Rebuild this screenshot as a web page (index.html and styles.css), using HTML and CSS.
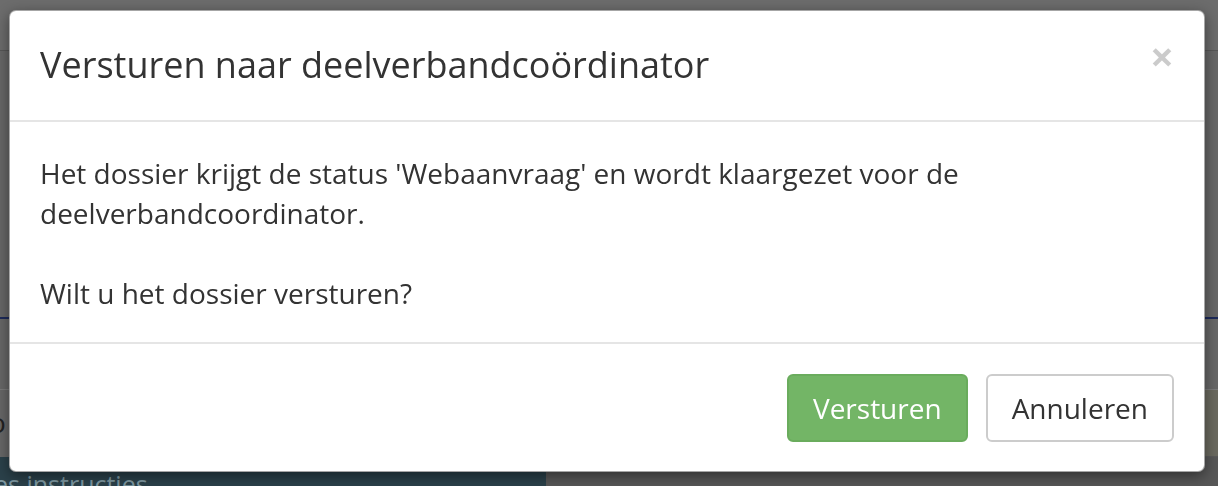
FILE: index.html
```html
<!DOCTYPE html>
<html lang="nl">
<head>
<meta charset="utf-8">
<title>Versturen naar deelverbandcoördinator</title>
<link rel="stylesheet" href="styles.css">
</head>
<body>
<div class="page">
  <div class="topbar"></div>
  <div class="main"></div>
  <div class="rule-blue"></div>
  <div class="gap"></div>
  <div class="row-info">
    <div class="row-left">o</div>
    <div class="row-right"></div>
  </div>
  <div class="bottom">
    <div class="bottom-left">es instructies</div>
    <div class="bottom-right"></div>
  </div>
</div>

<div class="modal-layer">
  <div class="modal">
    <div class="modal-header">
      <h4 class="modal-title">Versturen naar deelverbandcoördinator</h4>
      <button class="close" type="button" aria-label="Sluiten">×</button>
    </div>
    <div class="modal-body">
      <p>Het dossier krijgt de status 'Webaanvraag' en wordt klaargezet voor de deelverbandcoordinator.</p>
      <p>Wilt u het dossier versturen?</p>
    </div>
    <div class="modal-footer">
      <button class="btn btn-success" type="button">Versturen</button>
      <button class="btn btn-default" type="button">Annuleren</button>
    </div>
  </div>
</div>
</body>
</html>
```

FILE: styles.css
```css
* { box-sizing: border-box; }

html, body {
  margin: 0;
  padding: 0;
  height: 100%;
  overflow: hidden;
}

body {
  font-family: "Open Sans", "Noto Sans", sans-serif;
  color: #333;
  background: #666;
}

/* dimmed page behind the modal */
.page {
  height: 100vh;
  display: flex;
  flex-direction: column;
}

.page > div {
  flex-shrink: 0;
}

.topbar {
  height: 51px;
  background: #6c6c6c;
  border-bottom: 1px solid #575757;
}

.main {
  height: 266px;
  background: #676767;
}

.rule-blue {
  height: 2px;
  background: #1d2a5a;
}

.gap {
  height: 71px;
  background: #676767;
  border-bottom: 1px solid #7a7a7a;
}

.row-info {
  height: 67px;
  display: flex;
}

.row-left {
  flex: 0 0 546px;
  background: #676767;
  color: #222;
  font-size: 28px;
  line-height: 64px;
  text-indent: -11px;
  overflow: hidden;
}

.row-right {
  flex: 1;
  background: #6a695f;
  border-bottom: 1px solid #5a5a5a;
}

.page > .bottom {
  flex: 1 1 0;
  min-height: 0;
  display: flex;
  overflow: hidden;
}

.bottom-left {
  flex: 0 0 546px;
  background: #2b414a;
  color: #7e98a1;
  font-size: 25px;
  line-height: 40px;
  padding-top: 7px;
  text-indent: -6px;
  overflow: hidden;
  white-space: nowrap;
}

.bottom-right {
  flex: 1;
  background: #575757;
}

/* modal */
.modal-layer {
  position: fixed;
  inset: 0;
  padding: 10px 13px 0 9px;
}

.modal {
  width: 1196px;
  background: #fff;
  border: 1px solid rgba(0, 0, 0, 0.35);
  border-radius: 7px;
  box-shadow: 0 4px 14px rgba(0, 0, 0, 0.45);
}

.modal-header {
  display: flex;
  align-items: flex-start;
  justify-content: space-between;
  padding: 30px 30px 31px;
  border-bottom: 2px solid #e5e5e5;
}

.modal-title {
  margin: 0;
  font-size: 36px;
  font-weight: 400;
  line-height: 48px;
  color: #333;
}

.close {
  margin: -9px 0 0;
  padding: 0;
  border: 0;
  background: none;
  font-family: "Open Sans", sans-serif;
  font-size: 42px;
  font-weight: 700;
  line-height: 48px;
  color: #000;
  opacity: 0.2;
  cursor: pointer;
}

.modal-body {
  padding: 31px 30px 29px;
  border-bottom: 2px solid #e5e5e5;
  font-size: 28px;
  line-height: 40px;
}

.modal-body p {
  margin: 0;
}

.modal-body p + p {
  margin-top: 40px;
}

.modal-footer {
  display: flex;
  justify-content: flex-end;
  gap: 18px;
  padding: 30px 30px 29px;
}

.btn {
  font-family: "Open Sans", sans-serif;
  font-size: 28px;
  line-height: 40px;
  height: 68px;
  padding: 12px 24px;
  border: 2px solid transparent;
  border-radius: 6px;
  cursor: pointer;
}

.btn-success {
  background: #73b566;
  border-color: #6aac5d;
  color: #fff;
}

.btn-default {
  background: #fff;
  border-color: #ccc;
  color: #333;
}
```
